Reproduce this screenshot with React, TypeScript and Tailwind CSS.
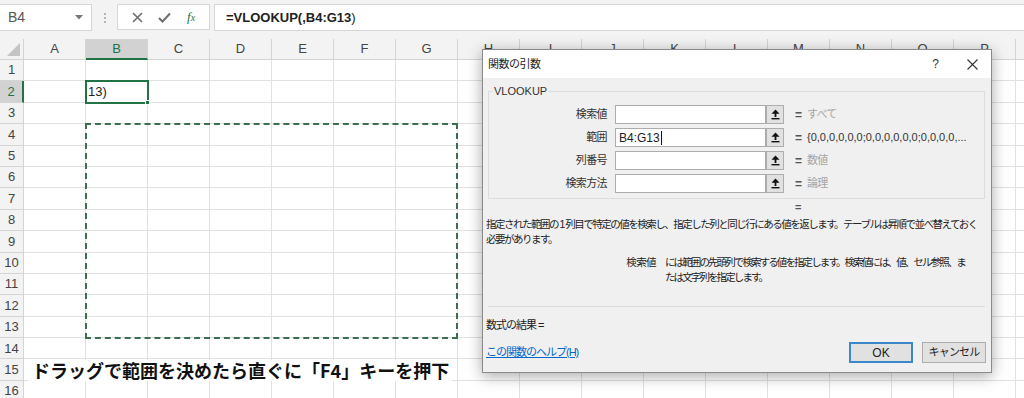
const COLS = "ABCDEFGHIJKLMNOPQ".split("");
const ROWS = Array.from({ length: 16 }, (_, i) => i + 1);

const ARGS = [
  { label: "検索値", value: "", result: "すべて", dim: true },
  { label: "範囲", value: "B4:G13", result: "{0,0,0,0,0,0;0,0,0,0,0,0;0,0,0,0,...", dim: false },
  { label: "列番号", value: "", result: "数値", dim: true },
  { label: "検索方法", value: "", result: "論理", dim: true },
];

const UpButton = () => {
  return (
    <div className="w-[18px] h-[19px] bg-[#e1e1e1] border border-[#adadad] flex items-center justify-center">
      <svg width="9" height="11" viewBox="0 0 9 11">
        <path d="M4.5 0.5 L8.5 4.8 L5.4 4.8 L5.4 8 L3.6 8 L3.6 4.8 L0.5 4.8 Z" fill="#111" />
        <rect x="0.5" y="9" width="8" height="1.4" fill="#111" />
      </svg>
    </div>
  );
};

const FormulaBar = () => {
  return (
    <div className="h-[39px] bg-[#f3f3f3] flex items-start pt-[4px] font-['Liberation_Sans',sans-serif]">
      <div className="w-[92px] h-[27px] bg-white border border-[#d6d6d6] border-l-0 flex items-center justify-between px-[8px]">
        <span className="text-[14px] text-[#555]">B4</span>
        <svg width="8" height="5" viewBox="0 0 8 5">
          <path d="M0 0 L8 0 L4 4.5 Z" fill="#777" />
        </svg>
      </div>
      <div className="w-[25px] h-[27px] flex flex-col items-center justify-center gap-[2px]">
        <span className="w-[2px] h-[2px] bg-[#b5b5b5]" />
        <span className="w-[2px] h-[2px] bg-[#b5b5b5]" />
        <span className="w-[2px] h-[2px] bg-[#b5b5b5]" />
      </div>
      <div className="w-[93px] h-[26px] bg-white border border-[#d6d6d6] flex items-center justify-around px-[6px]">
        <svg width="11" height="11" viewBox="0 0 11 11">
          <path d="M1 1 L10 10 M10 1 L1 10" stroke="#6d6d6d" strokeWidth="1.6" />
        </svg>
        <svg width="13" height="11" viewBox="0 0 13 11">
          <path d="M1 6 L4.5 9.5 L12 1.5" stroke="#6d6d6d" strokeWidth="2" fill="none" />
        </svg>
        <span className="text-[13px] italic text-[#217346] font-['Liberation_Serif',serif]">
          f<span className="text-[10px]">x</span>
        </span>
      </div>
      <div className="ml-[4px] flex-1 h-[27px] bg-white border border-[#d6d6d6] border-r-0 flex items-center pl-[11px]">
        <span className="text-[13px] font-bold text-[#222]">=VLOOKUP(,B4:G13</span>
        <span className="text-[13px] text-[#222]">)</span>
      </div>
    </div>
  );
};

const Sheet = () => {
  return (
    <div className="font-['Liberation_Sans',sans-serif]">
      <div className="flex h-[21px]">
        <div className="w-[24px] shrink-0 bg-[#f3f3f3] border-r border-b border-[#d4d4d4] flex items-end justify-end p-[3px]">
          <svg width="13" height="13" viewBox="0 0 13 13">
            <path d="M13 0 L13 13 L0 13 Z" fill="#c4c4c4" />
          </svg>
        </div>
        {COLS.map((c) =>
          c === "B" ? (
            <div
              key={c}
              className="w-[62px] shrink-0 bg-[#d2d2d2] border-r border-[#d4d4d4] border-b-2 border-b-[#217346] flex items-center justify-center text-[13px] text-[#217346]"
            >
              {c}
            </div>
          ) : (
            <div
              key={c}
              className="w-[62px] shrink-0 bg-[#f3f3f3] border-r border-b border-[#d4d4d4] flex items-center justify-center text-[13px] text-[#444]"
            >
              {c === "Q" ? "" : c}
            </div>
          )
        )}
      </div>
      {ROWS.map((r) => (
        <div key={r} className="flex h-[21.4px]">
          {r === 2 ? (
            <div className="w-[24px] shrink-0 bg-[#d2d2d2] border-r-2 border-r-[#217346] border-b border-[#d4d4d4] flex items-center justify-center text-[13px] text-[#217346]">
              {r}
            </div>
          ) : (
            <div className="w-[24px] shrink-0 bg-[#f3f3f3] border-r border-b border-[#d4d4d4] flex items-center justify-center text-[13px] text-[#444]">
              {r}
            </div>
          )}
          {COLS.map((c) => (
            <div
              key={c}
              className="w-[62px] shrink-0 bg-white border-r border-b border-[#e1e1e1] flex items-center pl-[2px] text-[13px] text-[#222]"
            >
              {r === 2 && c === "B" ? "13)" : ""}
            </div>
          ))}
        </div>
      ))}
    </div>
  );
};

const Dialog = () => {
  return (
    <div className="absolute left-[482px] top-[49px] w-[510px] h-[324px] bg-[#f0f0f0] border border-[#8a8a8a] shadow-[0_3px_14px_rgba(0,0,0,0.35)] font-['Liberation_Sans','Noto_Sans_CJK_JP',sans-serif] text-[#222]">
      <div className="h-[28px] bg-white flex items-center pl-[5px] pr-[13px]">
        <span className="text-[11px] tracking-[-0.5px]">関数の引数</span>
        <span className="ml-auto text-[12px] text-[#333]">?</span>
        <svg className="ml-[28px]" width="11" height="11" viewBox="0 0 11 11">
          <path d="M0.5 0.5 L10.5 10.5 M10.5 0.5 L0.5 10.5" stroke="#333" strokeWidth="1.1" />
        </svg>
      </div>

      <div className="relative mt-[13px] ml-[5px] w-[497px] h-[108px] border border-[#dcdcdc] pt-[13px] flex flex-col gap-[4px]">
        <span className="absolute -top-[8px] left-[4px] px-[1px] bg-[#f0f0f0] text-[11px] leading-[14px] text-[#333]">
          VLOOKUP
        </span>
        {ARGS.map((a) => (
          <div key={a.label} className="flex items-center h-[19px]">
            <div className="w-[118px] text-right text-[11px] tracking-[-0.6px] text-[#333]">{a.label}</div>
            <div className="ml-[8px] w-[151px] h-[19px] bg-white border border-[#acacac] flex items-center pl-[3px] text-[12px]">
              {a.value}
              {a.value && <span className="ml-[1px] w-[1px] h-[14px] bg-[#111]" />}
            </div>
            <UpButton />
            <span className="ml-[11px] text-[12px] font-bold text-[#555]">=</span>
            {a.dim ? (
              <span className="ml-[5px] text-[11px] tracking-[-0.8px] text-[#a6a6a6]">{a.result}</span>
            ) : (
              <span className="ml-[5px] text-[11px] text-[#333] whitespace-nowrap">{a.result}</span>
            )}
          </div>
        ))}
      </div>

      <div className="h-[16px] flex items-center pl-[312px]">
        <span className="text-[11px] font-bold text-[#555]">=</span>
      </div>

      <div className="mt-[2px] pl-[3px] text-[10.5px] leading-[15px] tracking-[-1.5px] whitespace-nowrap text-[#222]">
        <div>指定された範囲の 1 列目で特定の値を検索し、指定した列と同じ行にある値を返します。テーブルは昇順で並べ替えておく</div>
        <div>必要があります。</div>
      </div>

      <div className="mt-[8px] flex text-[10.5px] leading-[15px] whitespace-nowrap text-[#222]">
        <div className="w-[173px] text-right tracking-[-0.6px]">検索値</div>
        <div className="ml-[9px] tracking-[-1.9px]">
          <div>には範囲の先頭列で検索する値を指定します。検索値には、値、セル参照、ま</div>
          <div>たは文字列を指定します。</div>
        </div>
      </div>

      <div className="mt-[21px] ml-[5px] w-[497px] h-px bg-[#dcdcdc]" />

      <div className="mt-[11px] pl-[3px] text-[11px] leading-[15px] tracking-[-1px] text-[#222]">数式の結果 =</div>

      <div className="mt-[9px] flex items-center h-[21px] pl-[3px]">
        <span className="text-[11px] tracking-[-1px] text-[#0066cc] underline">この関数のヘルプ(H)</span>
        <div className="ml-auto w-[64px] h-[21px] bg-[#e1e1e1] border-2 border-[#3c87c8] flex items-center justify-center text-[12px] text-[#222]">
          OK
        </div>
        <div className="ml-[9px] mr-[5px] w-[64px] h-[21px] bg-[#e1e1e1] border border-[#adadad] flex items-center justify-center text-[11px] tracking-[-0.8px] text-[#222]">
          キャンセル
        </div>
      </div>
    </div>
  );
};

export default function App() {
  return (
    <div className="relative w-[1024px] h-[398px] overflow-hidden bg-white">
      <FormulaBar />
      <Sheet />

      <div className="absolute left-[85px] top-[80px] w-[64px] h-[24px] border-2 border-[#217346]">
        <span className="absolute -right-[3px] -bottom-[3px] w-[5px] h-[5px] bg-[#217346] border border-white" />
      </div>

      <div className="absolute left-[85px] top-[123px] w-[373px] h-[216px] border-2 border-dashed border-[#3e6e52]" />

      <div className="absolute left-[28px] top-[360px] w-[424px] h-[21px] bg-white pl-[4px] flex items-center font-['Noto_Sans_CJK_JP',sans-serif] text-[18px] leading-[21px] font-bold text-[#111] whitespace-nowrap">
        ドラッグで範囲を決めたら直ぐに「F4」キーを押下
      </div>

      <Dialog />
    </div>
  );
}
